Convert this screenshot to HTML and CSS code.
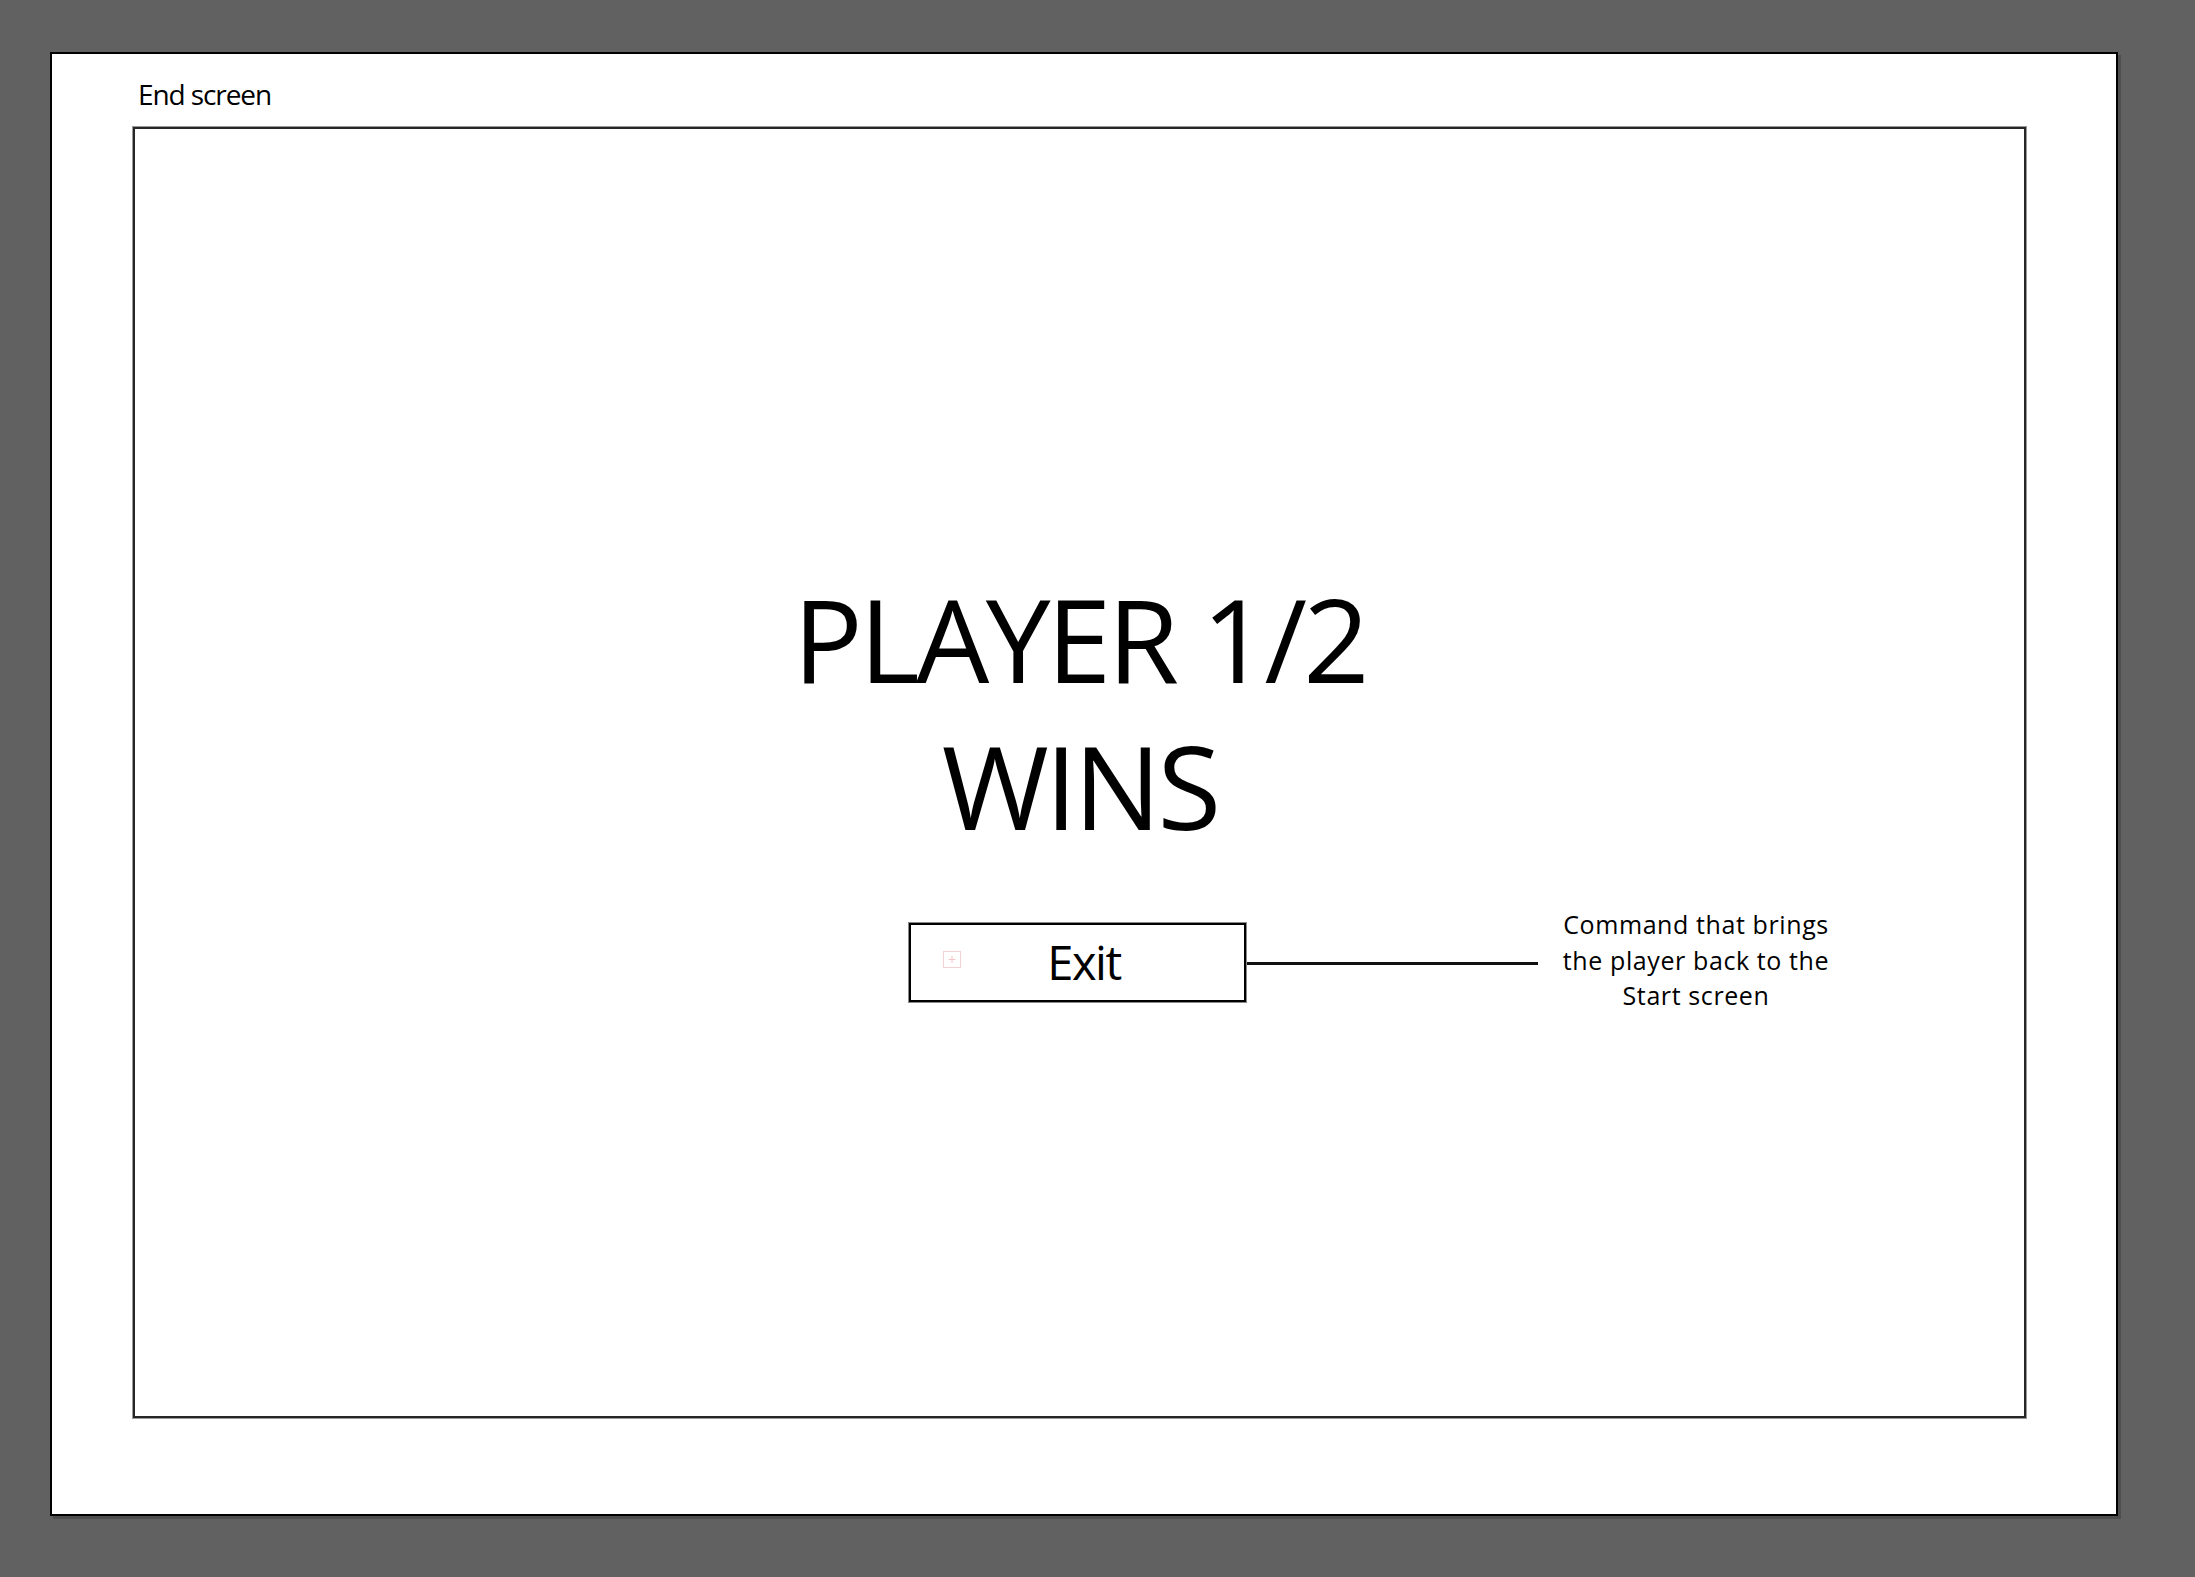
FILE: index.html
```html
<!DOCTYPE html>
<html>
<head>
<meta charset="utf-8">
<title>End screen</title>
<link rel="stylesheet" href="styles.css">
</head>
<body>
<div class="artboard">
  <div class="label">End screen</div>
  <div class="frame">
    <h1 class="title">PLAYER 1/2<br>WINS</h1>
    <div class="exit-row">
      <div class="exit-btn">
        <span class="marker">
          <svg width="18" height="17" viewBox="0 0 18 17"><rect x="0.5" y="0.5" width="17" height="16" fill="none" stroke="#f5d2d2" stroke-width="1"/><path d="M9 5v7M5.5 8.5h7" stroke="#f3c4c4" stroke-width="1"/></svg>
        </span>
        <span class="exit-text">Exit</span>
      </div>
      <div class="connector"></div>
      <p class="note">Command that brings<br>the player back to the<br>Start screen</p>
    </div>
  </div>
</div>
</body>
</html>
```
FILE: styles.css
```css
html, body {
  margin: 0;
  padding: 0;
}
body {
  background: #616161;
  width: 2195px;
  height: 1577px;
  overflow: hidden;
  font-family: "Open Sans", "Noto Sans", sans-serif;
  color: #000;
}
.artboard {
  box-sizing: border-box;
  margin: 52px 0 0 50px;
  width: 2068px;
  height: 1464px;
  background: #fff;
  border: 2px solid #000;
  box-shadow: 3px 3px 0 #4e4e4e;
  padding: 23px 0 0 81px;
  display: flex;
  flex-direction: column;
}
.label {
  font-size: 28px;
  line-height: 34px;
  height: 34px;
  padding-left: 5px;
  letter-spacing: -1.1px;
  margin-bottom: 16px;
}
.frame {
  box-sizing: border-box;
  width: 1893px;
  height: 1291px;
  border: 2px solid #262626;
  box-shadow: 0 0 0 1px #9a9a9a;
  display: flex;
  flex-direction: column;
}
.title {
  margin: 0;
  padding: 436px 0 0 0;
  font-weight: 400;
  font-size: 116px;
  line-height: 147px;
  text-align: center;
  letter-spacing: -3.7px;
}
.exit-row {
  display: flex;
  align-items: center;
  margin-top: 50px;
  padding-left: 774px;
}
.exit-btn {
  position: relative;
  box-sizing: border-box;
  width: 337px;
  height: 79px;
  border: 2px solid #000;
  box-shadow: 0 0 0 1px #8a8a8a;
  display: flex;
  justify-content: center;
  padding-left: 13px;
}
.exit-text {
  font-size: 47px;
  line-height: 75px;
  letter-spacing: -1.5px;
}
.marker {
  position: absolute;
  left: 32px;
  top: 26px;
  width: 18px;
  height: 17px;
  display: block;
}
.marker svg { display: block; }
.connector {
  width: 292px;
  height: 3px;
  margin-top: 3px;
  background: #111;
}
.note {
  margin: 0 0 0 8px;
  width: 300px;
  font-size: 25px;
  line-height: 35.5px;
  text-align: center;
  letter-spacing: 0.6px;
  transform: translateY(-2px);
}
```
